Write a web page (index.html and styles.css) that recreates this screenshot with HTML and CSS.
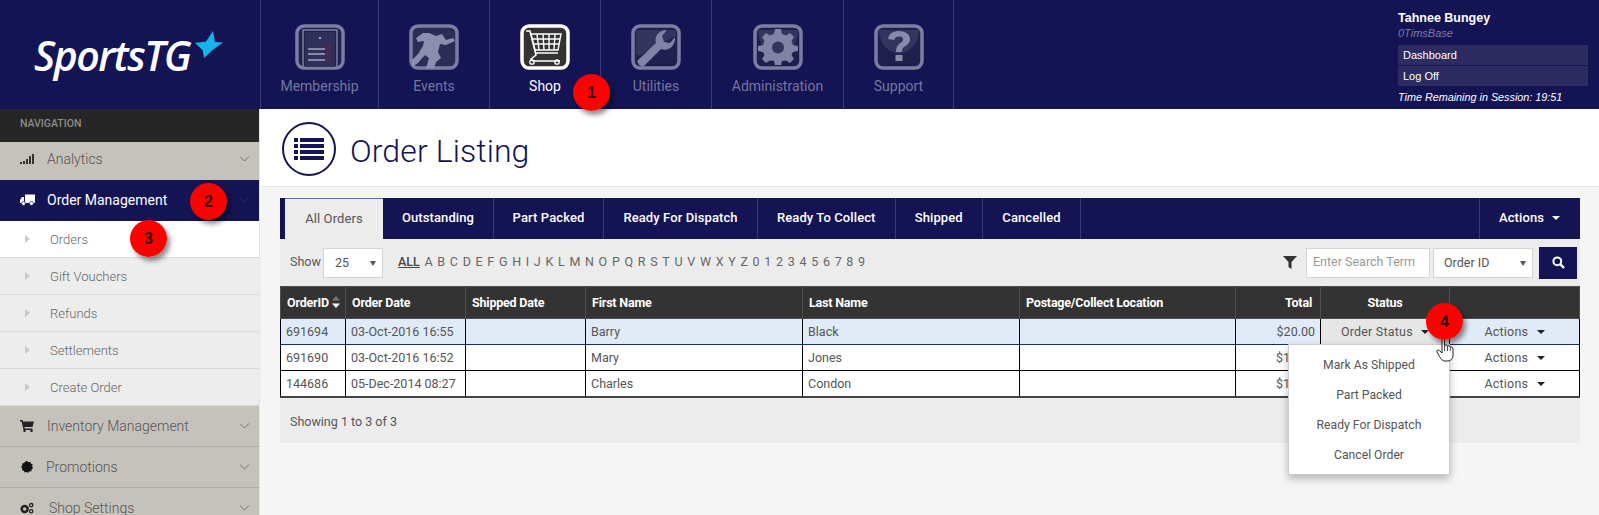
FILE: index.html
```html
<!DOCTYPE html>
<html lang="en">
<head>
    <meta charset="UTF-8">
    <title>Order Listing</title>
    <link rel="stylesheet" href="styles.css">
</head>
<body>
    <header class="topbar">
        <div class="logo">
            <span class="logo-text">SportsTG</span>
            <svg class="logo-star" viewBox="0 0 28 27"><path fill="#16b4ea" d="M18 0 20 11 28 11.500 17 19.500 9 27 7.500 19 0 12 11 10.500Z"/></svg>
        </div>
        <nav class="modules">
            <a class="module">
                <svg class="module-icon" viewBox="0 0 50 46">
                    <rect x="2" y="2" width="46" height="42" rx="7" fill="#20204e" stroke="#7d7da3" stroke-width="3.5"/>
                    <path fill="none" stroke="#7d7da3" stroke-width="1.5" d="M8 44V6H42V44"/>
                    <rect x="10" y="8" width="30" height="35" fill="#30305a"/>
                    <circle cx="25" cy="14" r="1.2" fill="#9a9abb"/>
                    <path fill="none" stroke="#a5a5c2" stroke-width="1.6" d="M13 25H30M13 30H30M13 36H30"/>
                    <path fill="none" stroke="#6e2346" stroke-width="1.5" d="M30 23l2 2 4-4M30 29l2 2 4-4M30 35l2 2 4-4"/>
                </svg>
                <span>Membership</span>
            </a>
            <a class="module">
                <svg class="module-icon" viewBox="0 0 50 46">
                    <rect x="2" y="2" width="46" height="42" rx="7" fill="#2c2c55" stroke="#7d7da3" stroke-width="3.5"/>
                    <path fill="#8d8db0" d="M7 14 14 9 20 9 27 12 33 10 37 16 44 14 46 17 37 21 31 20 29 28 32 34 27 38 25 44 17 44 20 34 16 31 8 40 3 42 3 36 9 30 14 22 15 17 9 18Z"/>
                </svg>
                <span>Events</span>
            </a>
            <a class="module module-active">
                <svg class="module-icon" viewBox="0 0 50 46">
                    <rect x="2" y="2" width="46" height="42" rx="7" fill="#333" stroke="#fff" stroke-width="3.5"/>
                    <path fill="none" stroke="#fff" stroke-width="1.6" d="M6 7H10L16 31 11 35 13 37H40"/>
                    <path fill="none" stroke="#fff" stroke-width="1.4" d="M11 10H41L38 26H15ZM12 15H40M13 20H39M17 10 19 26M23 10 24 26M29 10 29 26M35 10 34 26"/>
                    <path fill="none" stroke="#fff" stroke-width="1.5" d="M15 29H38"/>
                    <circle cx="12" cy="38" r="2.2" fill="none" stroke="#fff" stroke-width="1.3"/>
                    <circle cx="37" cy="38" r="2.2" fill="none" stroke="#fff" stroke-width="1.3"/>
                </svg>
                <span>Shop</span>
            </a>
            <a class="module">
                <svg class="module-icon" viewBox="0 0 50 46">
                    <rect x="2" y="2" width="46" height="42" rx="7" fill="#20204e" stroke="#7d7da3" stroke-width="3.5"/>
                    <path fill="#34345f" d="M5 6H45V12Q28 20 8 32L5 30Z"/>
                    <path fill="#8282a6" d="M6 37 25 19C23 12 28 6 36 6L31 12 33 18 39 19 44 13C45 21 38 28 30 25L12 43 8 41Z"/>
                </svg>
                <span>Utilities</span>
            </a>
            <a class="module">
                <svg class="module-icon" viewBox="0 0 50 46">
                    <rect x="2" y="2" width="46" height="42" rx="7" fill="#20204e" stroke="#7d7da3" stroke-width="3.5"/>
                    <path fill="#34345f" d="M5 6H45Q44 28 25 30 6 28 5 6Z"/>
                    <path fill="#8282a6" fill-rule="evenodd" d="M22 7H28L29 12 33 13.500 37 11 41 15 38.500 19 40 23 45 24V29L40 30 38.500 33 41 37 37 41 33 38.500 29 39 28 43H22L21 39 17 38.500 13 41 9 37 11.500 33 10 30 5 29V24L10 23 11.500 19 9 15 13 11 17 13.500 21 12ZM25 19.500A6 6 0 1 0 25 31.500 6 6 0 1 0 25 19.500Z" transform="translate(0 -2)"/>
                </svg>
                <span>Administration</span>
            </a>
            <a class="module">
                <svg class="module-icon" viewBox="0 0 50 46">
                    <rect x="2" y="2" width="46" height="42" rx="7" fill="#20204e" stroke="#7d7da3" stroke-width="3.5"/>
                    <path fill="#34345f" d="M5 6H45Q44 26 25 30 6 26 5 6Z"/>
                    <path fill="#8a8aac" d="M14 15C15 9 20 7 25 7 31 7 36 10 36 15 36 19 33 21 30 23 28 24.500 28 26 28 28H22C22 24 23 22 25 20 28 18 29 17 29 15 29 13 27 12.500 25 12.500 23 12.500 21 13 20.500 16ZM21.500 31H28.500V37H21.500Z"/>
                </svg>
                <span>Support</span>
            </a>
        </nav>
        <div class="user-box">
            <div class="user-name">Tahnee Bungey</div>
            <div class="user-org">0TimsBase</div>
            <a class="user-link">Dashboard</a>
            <a class="user-link">Log Off</a>
            <div class="session">Time Remaining in Session: 19:51</div>
        </div>
    </header>

    <div class="page">
        <aside class="sidebar">
            <div class="sidebar-title">NAVIGATION</div>
            <a class="side-item side-short">
                <svg class="side-icon" viewBox="0 0 14 10"><path fill="#333" d="M0 8h2v2H0zM3 7h2v3H3zM6 5h2v5H6zM9 2h2v8H9zM12 0h2v10h-2z"/></svg>
                <span>Analytics</span>
                <svg class="chevron" viewBox="0 0 10 6"><path d="M.5.500 5 5 9.500.5"/></svg>
            </a>
            <a class="side-item side-open">
                <svg class="side-icon side-icon-wide" viewBox="0 0 15 11"><path fill="#fff" d="M5 0h10v8.500H5zM4 2.500V8.500H0V5.500L2 2.500z"/><circle cx="3.500" cy="9" r="2" fill="#fff" stroke="#141454" stroke-width=".7"/><circle cx="11.500" cy="9" r="2" fill="#fff" stroke="#141454" stroke-width=".7"/></svg>
                <span>Order Management</span>
                <svg class="chevron" viewBox="0 0 10 6"><path d="M.5.500 5 5 9.500.5"/></svg>
            </a>
            <a class="sub-item sub-active">Orders</a>
            <a class="sub-item">Gift Vouchers</a>
            <a class="sub-item">Refunds</a>
            <a class="sub-item">Settlements</a>
            <a class="sub-item">Create Order</a>
            <a class="side-item">
                <svg class="side-icon" viewBox="0 0 14 12"><path fill="#222" d="M0 0h2.500l.5 1.500H14L12.500 7H4.500L4.800 8.500H12.500V10H3.500L1.500 1.500H0Z"/><circle cx="4.500" cy="11" r="1.200" fill="#222"/><circle cx="11.500" cy="11" r="1.200" fill="#222"/></svg>
                <span>Inventory Management</span>
                <svg class="chevron" viewBox="0 0 10 6"><path d="M.5.500 5 5 9.500.5"/></svg>
            </a>
            <a class="side-item side-tight">
                <svg class="side-icon" viewBox="0 0 12 12"><path fill="#111" d="M6 0 7.500 1.300 9.500.9 10 2.700 11.700 3.500 11.100 5.300 12 7 10.600 8.200 10.500 10.200 8.600 10.200 7.300 11.700 5.500 11 3.700 11.500 2.900 9.800 1 9.200 1.300 7.300 0 5.800 1.300 4.400 1.200 2.400 3.100 2.100 4.200.5Z"/></svg>
                <span>Promotions</span>
                <svg class="chevron" viewBox="0 0 10 6"><path d="M.5.500 5 5 9.500.5"/></svg>
            </a>
            <a class="side-item side-wide">
                <svg class="side-icon" viewBox="0 0 15 12"><circle cx="5" cy="7" r="3.200" fill="none" stroke="#222" stroke-width="2.600"/><circle cx="12" cy="3" r="1.800" fill="none" stroke="#222" stroke-width="1.400"/><circle cx="12" cy="9.500" r="1.800" fill="none" stroke="#222" stroke-width="1.400"/></svg>
                <span>Shop Settings</span>
                <svg class="chevron" viewBox="0 0 10 6"><path d="M.5.500 5 5 9.500.5"/></svg>
            </a>
        </aside>

        <main class="content">
            <div class="page-title">
                <span class="title-icon">
                    <svg viewBox="0 0 30 22"><path fill="#141454" d="M0 0h4v4H0zM6 0h24v4H6zM0 6h4v4H0zM6 6h24v4H6zM0 12h4v4H0zM6 12h24v4H6zM0 18h4v4H0zM6 18h24v4H6z"/></svg>
                </span>
                <h1>Order Listing</h1>
            </div>

            <section class="panel">
                <div class="tabs">
                    <a class="tab tab-active">All Orders</a>
                    <a class="tab">Outstanding</a>
                    <a class="tab">Part Packed</a>
                    <a class="tab">Ready For Dispatch</a>
                    <a class="tab">Ready To Collect</a>
                    <a class="tab">Shipped</a>
                    <a class="tab">Cancelled</a>
                    <a class="tab tab-actions">Actions <i class="caret"></i></a>
                </div>

                <div class="toolbar">
                    <span class="show-label">Show</span>
                    <span class="select select-show">25<i class="select-arrow"></i></span>
                    <div class="letters">
                        <a class="letter-all">ALL</a>
                        <a>A</a><a>B</a><a>C</a><a>D</a><a>E</a><a>F</a><a>G</a><a>H</a><a>I</a><a>J</a><a>K</a><a>L</a><a>M</a><a>N</a><a>O</a><a>P</a><a>Q</a><a>R</a><a>S</a><a>T</a><a>U</a><a>V</a><a>W</a><a>X</a><a>Y</a><a>Z</a><a>0</a><a>1</a><a>2</a><a>3</a><a>4</a><a>5</a><a>6</a><a>7</a><a>8</a><a>9</a>
                    </div>
                    <svg class="filter-icon" viewBox="0 0 14 13"><path fill="#333" d="M0 0H14L8.500 6V13L5.500 11V6Z"/></svg>
                    <span class="search-input">Enter Search Term</span>
                    <span class="select select-field">Order ID<i class="select-arrow"></i></span>
                    <a class="search-btn">
                        <svg viewBox="0 0 13 13"><circle cx="5.300" cy="5.300" r="3.900" fill="none" stroke="#fff" stroke-width="2"/><path stroke="#fff" stroke-width="2.400" d="M8.200 8.200 12 12"/></svg>
                    </a>
                </div>

                <table class="orders">
                    <colgroup>
                        <col class="col-id"><col class="col-date"><col class="col-date"><col class="col-name"><col class="col-name"><col class="col-location"><col class="col-total"><col class="col-status"><col class="col-actions">
                    </colgroup>
                    <thead>
                        <tr>
                            <th>OrderID<svg class="sort" viewBox="0 0 8 12"><path fill="#777" d="M4 0 8 4.500H0Z"/><path fill="#fff" d="M4 12 0 7.500H8Z"/></svg></th>
                            <th>Order Date</th>
                            <th>Shipped Date</th>
                            <th>First Name</th>
                            <th>Last Name</th>
                            <th>Postage/Collect Location</th>
                            <th class="cell-right">Total</th>
                            <th class="cell-center">Status</th>
                            <th></th>
                        </tr>
                    </thead>
                    <tbody>
                        <tr class="row-selected">
                            <td>691694</td><td>03-Oct-2016 16:55</td><td></td><td>Barry</td><td>Black</td><td></td>
                            <td class="cell-right">$20.00</td>
                            <td class="cell-status cell-open">Order Status <i class="caret caret-dark"></i></td>
                            <td class="cell-center cell-actions">Actions <i class="caret caret-dark"></i></td>
                        </tr>
                        <tr>
                            <td>691690</td><td>03-Oct-2016 16:52</td><td></td><td>Mary</td><td>Jones</td><td></td>
                            <td class="cell-total-cut">$1</td>
                            <td></td>
                            <td class="cell-center cell-actions">Actions <i class="caret caret-dark"></i></td>
                        </tr>
                        <tr>
                            <td>144686</td><td>05-Dec-2014 08:27</td><td></td><td>Charles</td><td>Condon</td><td></td>
                            <td class="cell-total-cut">$1</td>
                            <td></td>
                            <td class="cell-center cell-actions">Actions <i class="caret caret-dark"></i></td>
                        </tr>
                    </tbody>
                </table>

                <div class="panel-foot">Showing 1 to 3 of 3</div>
            </section>
        </main>
    </div>

    <ul class="status-menu">
        <li>Mark As Shipped</li>
        <li>Part Packed</li>
        <li>Ready For Dispatch</li>
        <li>Cancel Order</li>
    </ul>

    <svg class="hand-cursor" viewBox="0 0 18 26"><path fill="#fff" stroke="#222" stroke-width="1" d="M6 2C6 .5 8.500 .5 8.500 2V9.500C9.500 8.700 11 8.800 11.500 10 12.500 9.400 14 9.700 14.300 11 15.500 10.600 17 11.300 17 13V19C17 22 15 25 12 25H9C6.500 25 5 23 3.500 20.500L1 16C.3 14.500 2 13.300 3.300 14.500L6 17Z"/><path fill="none" stroke="#222" stroke-width=".8" d="M8.500 10V15M11.500 10V15M14.300 11V15"/></svg>

    <span class="step step-1">1</span>
    <span class="step step-2">2</span>
    <span class="step step-3">3</span>
    <span class="step step-4">4</span>
</body>
</html>
```

FILE: styles.css
```css
* {
    margin: 0;
    padding: 0;
    box-sizing: border-box;
}

html, body {
    height: 515px;
    overflow: hidden;
}

body {
    position: relative;
    background: #f5f5f5;
    color: #555;
    font-family: 'Roboto', sans-serif;
    font-size: 13px;
}

/* Top bar */
.topbar {
    display: flex;
    height: 109px;
    background: #141454;
}

.logo {
    position: relative;
    width: 260px;
    flex: none;
    padding: 27px 0 0 34px;
}

.logo-text {
    color: #fff;
    font-family: 'Open Sans', sans-serif;
    font-size: 41px;
    font-style: italic;
    font-weight: 600;
    letter-spacing: -1.500px;
}

.logo-star {
    position: absolute;
    left: 195px;
    top: 31px;
    width: 28px;
    height: 27px;
}

.modules {
    display: flex;
    flex: 1;
    align-items: stretch;
}

.module {
    display: flex;
    flex-direction: column;
    align-items: center;
    padding: 24px 20px 0;
    border-left: 1px solid #3a3a72;
    color: #75759f;
    font-size: 14px;
    gap: 8px;
}

.module:nth-child(1) { width: 118px; }
.module:nth-child(2),
.module:nth-child(3),
.module:nth-child(4),
.module:nth-child(6) { width: 111px; }
.module:nth-child(5) { width: 132px; }
.module:nth-child(6) { border-right: 1px solid #3a3a72; }

.module-active {
    color: #fff;
}

.module-icon {
    width: 50px;
    height: 46px;
    flex: none;
}

.user-box {
    width: 201px;
    flex: none;
    padding: 11px 11px 0 0;
    font-family: 'Liberation Sans', sans-serif;
    font-size: 11px;
    color: #fff;
}

.user-name {
    font-size: 12.500px;
    font-weight: 700;
    line-height: 14px;
}

.user-org {
    margin: 1px 0 5px;
    color: #7c7ca6;
    font-style: italic;
    font-size: 11px;
    line-height: 14px;
}

.user-link {
    display: block;
    height: 20px;
    margin-bottom: 1px;
    padding-left: 5px;
    background: #2c2c62;
    line-height: 20px;
}

.session {
    margin-top: 3px;
    font-style: italic;
    font-size: 10.800px;
    line-height: 17px;
}

/* Sidebar */
.page {
    display: flex;
    height: 406px;
}

.sidebar {
    width: 260px;
    flex: none;
    overflow: hidden;
    border-right: 1px solid #e4e4e4;
}

.sidebar-title {
    height: 33px;
    background: #262626;
    color: #8c8c8c;
    font-size: 10.500px;
    font-weight: 500;
    line-height: 30px;
    padding-left: 20px;
}

.side-item {
    display: flex;
    align-items: center;
    height: 41px;
    padding: 0 9px 0 20px;
    background: #c5c2bc;
    border-bottom: 1px solid #aeaba5;
    color: #555;
    font-size: 14px;
    font-weight: 300;
}

.side-item span {
    flex: 1;
    padding-left: 13px;
}

.side-short {
    height: 38px;
    padding-bottom: 5px;
    border-bottom: 0;
}

.side-open {
    padding-bottom: 2px;
    background: #141454;
    border-bottom: 0;
    color: #fff;
    font-weight: 400;
}

.side-tight span {
    padding-left: 12px;
}

.side-wide span {
    padding-left: 15px;
}

.side-icon {
    width: 14px;
    height: 12px;
    flex: none;
}

.side-icon-wide {
    width: 15px;
    margin-right: -1px;
}

.chevron {
    width: 11px;
    height: 6px;
    flex: none;
    fill: none;
    stroke: #555;
    stroke-width: .7;
}

.side-open .chevron {
    stroke: #34346c;
}

.sub-item {
    display: block;
    position: relative;
    height: 37px;
    padding-left: 50px;
    background: #ededed;
    border-bottom: 1px solid #d9d9d9;
    color: #666;
    font-size: 13px;
    font-weight: 300;
    line-height: 38px;
}

.sub-item::before {
    content: '';
    position: absolute;
    left: 25px;
    top: 14px;
    border-left: 5px solid #c8c8c8;
    border-top: 4.500px solid transparent;
    border-bottom: 4.500px solid transparent;
}

.sub-active {
    background: #fff;
}

/* Main */
.content {
    flex: 1;
    min-width: 0;
}

.page-title {
    display: flex;
    align-items: center;
    height: 78px;
    padding-left: 21px;
    gap: 14px;
    background: #fff;
    border-bottom: 1px solid #e5e5e5;
}

.title-icon {
    display: flex;
    align-items: center;
    justify-content: center;
    width: 54px;
    height: 54px;
    margin: 2px 0 0 1px;
    border: 2px solid #141454;
    border-radius: 50%;
}

.title-icon svg {
    width: 30px;
    height: 22px;
}

.page-title h1 {
    padding-top: 6px;
    color: #141454;
    font-size: 32px;
    font-weight: 300;
    letter-spacing: .1px;
}

.panel {
    margin: 11px 19px 0 20px;
    background: #ececec;
}

.tabs {
    display: flex;
    height: 41px;
    padding-left: 5px;
    background: #141454;
}

.tab {
    border-right: 1px solid #3a3a72;
    color: #fff;
    font-weight: 500;
    letter-spacing: .1px;
    line-height: 40px;
    text-align: center;
    white-space: nowrap;
}

.tab-active {
    width: 98px;
    background: #ececec;
    border-top: 1px solid #4a7ab0;
    border-right: 0;
    color: #555;
    font-weight: 400;
}

.tab:nth-child(2) { width: 111px; }
.tab:nth-child(3) { width: 110px; }
.tab:nth-child(4) { width: 154px; }
.tab:nth-child(5) { width: 137.500px; }
.tab:nth-child(6) { width: 87.500px; }
.tab:nth-child(7) { width: 98px; }

.tab-actions {
    width: 101px;
    margin-left: auto;
    padding-left: 19px;
    border-left: 1px solid #3a3a72;
    border-right: 0;
    text-align: left;
}

.caret {
    display: inline-block;
    margin-left: 5px;
    vertical-align: 2px;
    border-top: 4px solid #fff;
    border-left: 4px solid transparent;
    border-right: 4px solid transparent;
}

.caret-dark {
    border-top-color: #222;
}

.toolbar {
    display: flex;
    align-items: center;
    height: 47px;
    padding: 0 3px 0 10px;
    font-size: 12.500px;
}

.show-label {
    width: 33px;
    margin-top: -2px;
}

.select {
    position: relative;
    display: block;
    height: 30px;
    background: #fff;
    border: 1px solid #d4d4d4;
    line-height: 27px;
}

.select-show {
    width: 60px;
    padding-left: 11px;
}

.select-field {
    width: 100px;
    margin-right: 6px;
    padding-left: 10px;
    line-height: 28px;
}

.select-arrow {
    position: absolute;
    right: 6px;
    top: 12px;
    border-top: 5px solid #555;
    border-left: 3px solid transparent;
    border-right: 3px solid transparent;
}

.letters {
    display: flex;
    flex: 1;
    gap: 4.700px;
    margin: -2px 0 0 15px;
    color: #666;
}

.letter-all {
    margin-right: 0;
    font-weight: 500;
    color: #444;
    text-decoration: underline;
}

.filter-icon {
    width: 14px;
    height: 13px;
    margin-right: 9px;
}

.search-input {
    width: 124px;
    height: 30px;
    margin-right: 3px;
    padding-left: 6px;
    background: #fff;
    border: 1px solid #d4d4d4;
    color: #999;
    line-height: 26px;
}

.search-btn {
    display: flex;
    align-items: center;
    justify-content: center;
    width: 38px;
    height: 32px;
    background: #141454;
}

.search-btn svg {
    width: 13px;
    height: 13px;
}

/* Table */
.orders {
    width: 1300px;
    table-layout: fixed;
    border-collapse: collapse;
    background: #fff;
    border-bottom: 2px solid #444;
}

.col-id { width: 65px; }
.col-date { width: 120px; }
.col-name { width: 217px; }
.col-location { width: 216px; }
.col-total { width: 85px; }
.col-status { width: 129px; }

.orders th {
    height: 32px;
    padding: 0 6px;
    background: #333;
    border: 1px solid #4d4d4d;
    color: #fff;
    font-size: 12.500px;
    font-weight: 700;
    letter-spacing: -.2px;
    text-align: left;
    white-space: nowrap;
}

.sort {
    width: 8px;
    height: 12px;
    margin-left: 3px;
    vertical-align: -1px;
}

.orders td {
    height: 26px;
    padding: 0 5px;
    border: 1px solid #000;
    border-top-color: #333;
    font-size: 12.500px;
    white-space: nowrap;
}

.orders th.cell-right {
    padding-right: 8px;
    text-align: right;
}

.orders td.cell-right {
    padding-right: 5px;
    text-align: right;
}

.orders td.cell-total-cut {
    padding-left: 40px;
}

.orders th.cell-center,
.orders td.cell-center,
.orders td.cell-status {
    text-align: center;
}

.orders td.cell-status,
.orders td.cell-actions {
    letter-spacing: .2px;
}

.row-selected td {
    background: #e1ebf7;
    border-bottom-color: #14305c;
}

.row-selected td.cell-open {
    background: #e6e6e6;
}

.panel-foot {
    height: 45px;
    padding-left: 10px;
    line-height: 47px;
    font-size: 12.500px;
}

/* Overlays */
.status-menu {
    position: absolute;
    left: 1288px;
    top: 344px;
    width: 162px;
    height: 131px;
    padding-top: 5px;
    background: #fff;
    border: 1px solid #ccc;
    box-shadow: 0 4px 8px rgba(0, 0, 0, 0.25);
    list-style: none;
    font-size: 12.200px;
    text-align: center;
}

.status-menu li {
    height: 30px;
    line-height: 30px;
}

.hand-cursor {
    position: absolute;
    left: 1436px;
    top: 336px;
    width: 18px;
    height: 26px;
}

.step {
    position: absolute;
    width: 37px;
    height: 37px;
    background: radial-gradient(circle at 45% 45%, #ff0000 70%, #e60000);
    border-radius: 50%;
    box-shadow: 3px 4px 5px rgba(0, 0, 0, 0.45);
    color: #300;
    font-family: 'Liberation Sans', sans-serif;
    font-size: 16px;
    font-weight: 700;
    line-height: 37px;
    text-align: center;
}

.step-1 { left: 573px; top: 74px; }
.step-2 { left: 190px; top: 183px; }
.step-3 { left: 130px; top: 220px; }
.step-4 { left: 1426px; top: 303px; }
```
